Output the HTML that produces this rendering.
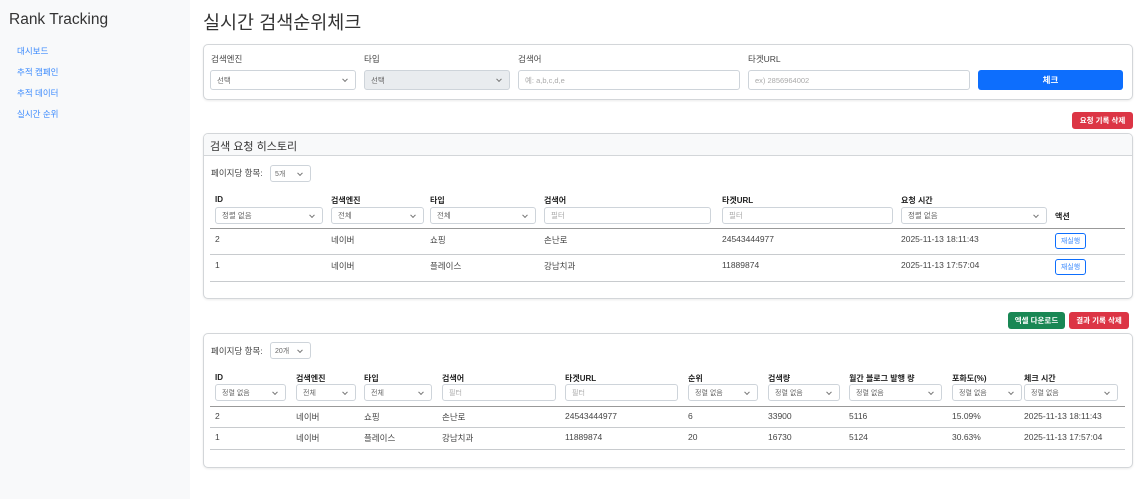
<!DOCTYPE html>
<html><head><meta charset="utf-8"><style>
*{box-sizing:border-box;margin:0;padding:0}
body{width:1143px;height:499px;position:relative;background:#fff;font-family:"Liberation Sans","Noto Sans CJK KR",sans-serif;color:#212529;overflow:hidden}
.a{position:absolute;white-space:nowrap}
.side{position:absolute;left:0;top:0;width:190px;height:499px;background:#f8f9fa}
.nav{position:absolute;left:17px;font-size:8.5px;color:#3d8bfd}
.card{position:absolute;border:1px solid #d3d6d9;border-radius:5px;background:#fff;box-shadow:0 1px 2px rgba(0,0,0,.08)}
.lbl{position:absolute;font-size:8.5px;color:#444}
.ctl{position:absolute;border:1px solid #ced4da;border-radius:3px;background:#fff;font-size:7.5px;color:#666;padding-left:6px;display:flex;align-items:center}
.sel::after{content:"";position:absolute;right:8px;top:50%;width:3px;height:3px;border-right:1px solid #777;border-bottom:1px solid #777;transform:translateY(-70%) rotate(45deg)}
.ph{color:#aaa}
.th{position:absolute;font-size:8px;font-weight:bold;color:#222}
.td{position:absolute;font-size:8.5px;color:#444}
.hr{position:absolute;height:1px;background:#c8cbce}
.btn{position:absolute;color:#fff;font-size:7.5px;font-weight:bold;border-radius:3px;display:flex;align-items:center;justify-content:center}
.re{position:absolute;border:1px solid #0d6efd;border-radius:3px;color:#3d8bfd;font-size:7px;display:flex;align-items:center;justify-content:center;width:31px;height:16px;left:1055px}
</style></head><body>
<div class="side"></div>
<div class="a" style="left:9px;top:11px;font-size:15.5px;color:#333">Rank Tracking</div>
<div class="nav" style="top:45px">대시보드</div>
<div class="nav" style="top:66px">추적 캠페인</div>
<div class="nav" style="top:87px">추적 데이터</div>
<div class="nav" style="top:108px">실시간 순위</div>

<div class="a" style="left:203px;top:9px;font-size:18.5px;color:#333">실시간 검색순위체크</div>

<div class="card" style="left:203px;top:44px;width:930px;height:56px"></div>
<div class="lbl" style="left:211px;top:53px">검색엔진</div>
<div class="lbl" style="left:364px;top:53px">타입</div>
<div class="lbl" style="left:518px;top:53px">검색어</div>
<div class="lbl" style="left:748px;top:53px">타겟URL</div>
<div class="ctl sel" style="left:210px;top:70px;width:146px;height:20px">선택</div>
<div class="ctl sel" style="left:364px;top:70px;width:146px;height:20px;background:#e9ecef">선택</div>
<div class="ctl ph" style="left:518px;top:70px;width:222px;height:20px">예: a,b,c,d,e</div>
<div class="ctl ph" style="left:748px;top:70px;width:222px;height:20px">ex) 2856964002</div>
<div class="btn" style="left:978px;top:70px;width:145px;height:20px;background:#0d6efd;font-size:8.5px">체크</div>

<div class="btn" style="left:1072px;top:112px;width:61px;height:17px;background:#dc3545">요청 기록 삭제</div>

<div class="card" style="left:203px;top:133px;width:930px;height:166px;overflow:hidden">
<div style="height:22px;background:#f8f9fa;border-bottom:1px solid #d3d6d9"></div></div>
<div class="a" style="left:210px;top:138px;font-size:11px;color:#333">검색 요청 히스토리</div>
<div class="lbl" style="left:211px;top:167px">페이지당 항목:</div>
<div class="ctl sel" style="left:270px;top:165px;width:41px;height:17px;font-size:7px;padding-left:4px">5개</div>
<div class="th" style="left:215px;top:195px">ID</div>
<div class="th" style="left:331px;top:195px">검색엔진</div>
<div class="th" style="left:430px;top:195px">타입</div>
<div class="th" style="left:544px;top:195px">검색어</div>
<div class="th" style="left:722px;top:195px">타겟URL</div>
<div class="th" style="left:901px;top:195px">요청 시간</div>
<div class="th" style="left:1055px;top:211px">액션</div>
<div class="ctl sel" style="left:215px;top:207px;width:108px;height:17px">정렬 없음</div>
<div class="ctl sel" style="left:331px;top:207px;width:93px;height:17px">전체</div>
<div class="ctl sel" style="left:430px;top:207px;width:106px;height:17px">전체</div>
<div class="ctl ph" style="left:544px;top:207px;width:167px;height:17px">필터</div>
<div class="ctl ph" style="left:722px;top:207px;width:171px;height:17px">필터</div>
<div class="ctl sel" style="left:901px;top:207px;width:146px;height:17px">정렬 없음</div>
<div class="hr" style="left:210px;top:228px;width:915px;background:#999"></div>
<div class="td" style="left:215px;top:234px">2</div><div class="td" style="left:331px;top:234px">네이버</div><div class="td" style="left:430px;top:234px">쇼핑</div><div class="td" style="left:544px;top:234px">손난로</div><div class="td" style="left:722px;top:234px">24543444977</div><div class="td" style="left:901px;top:234px">2025-11-13 18:11:43</div>
<div class="re" style="top:233px">재실행</div>
<div class="hr" style="left:210px;top:254px;width:915px"></div>
<div class="td" style="left:215px;top:260px">1</div><div class="td" style="left:331px;top:260px">네이버</div><div class="td" style="left:430px;top:260px">플레이스</div><div class="td" style="left:544px;top:260px">강남치과</div><div class="td" style="left:722px;top:260px">11889874</div><div class="td" style="left:901px;top:260px">2025-11-13 17:57:04</div>
<div class="re" style="top:259px">재실행</div>
<div class="hr" style="left:210px;top:281px;width:915px"></div>

<div class="btn" style="left:1008px;top:312px;width:57px;height:17px;background:#198754">엑셀 다운로드</div>
<div class="btn" style="left:1069px;top:312px;width:60px;height:17px;background:#dc3545">결과 기록 삭제</div>

<div class="card" style="left:203px;top:333px;width:930px;height:135px"></div>
<div class="lbl" style="left:211px;top:345px">페이지당 항목:</div>
<div class="ctl sel" style="left:270px;top:342px;width:41px;height:17px;font-size:7px;padding-left:4px">20개</div>
<div class="th" style="left:215px;top:373px">ID</div>
<div class="th" style="left:296px;top:373px">검색엔진</div>
<div class="th" style="left:364px;top:373px">타입</div>
<div class="th" style="left:442px;top:373px">검색어</div>
<div class="th" style="left:565px;top:373px">타겟URL</div>
<div class="th" style="left:688px;top:373px">순위</div>
<div class="th" style="left:768px;top:373px">검색량</div>
<div class="th" style="left:849px;top:373px">월간 블로그 발행 량</div>
<div class="th" style="left:952px;top:373px">포화도(%)</div>
<div class="th" style="left:1024px;top:373px">체크 시간</div>
<div class="ctl sel" style="left:215px;top:384px;width:71px;height:17px;font-size:7px">정렬 없음</div>
<div class="ctl sel" style="left:296px;top:384px;width:60px;height:17px;font-size:7px">전체</div>
<div class="ctl sel" style="left:364px;top:384px;width:68px;height:17px;font-size:7px">전체</div>
<div class="ctl ph" style="left:442px;top:384px;width:114px;height:17px;font-size:7px">필터</div>
<div class="ctl ph" style="left:565px;top:384px;width:113px;height:17px;font-size:7px">필터</div>
<div class="ctl sel" style="left:688px;top:384px;width:70px;height:17px;font-size:7px">정렬 없음</div>
<div class="ctl sel" style="left:768px;top:384px;width:72px;height:17px;font-size:7px">정렬 없음</div>
<div class="ctl sel" style="left:849px;top:384px;width:93px;height:17px;font-size:7px">정렬 없음</div>
<div class="ctl sel" style="left:952px;top:384px;width:70px;height:17px;font-size:7px">정렬 없음</div>
<div class="ctl sel" style="left:1024px;top:384px;width:94px;height:17px;font-size:7px">정렬 없음</div>
<div class="hr" style="left:210px;top:406px;width:915px;background:#999"></div>
<div class="td" style="left:215px;top:411px">2</div><div class="td" style="left:296px;top:411px">네이버</div><div class="td" style="left:364px;top:411px">쇼핑</div><div class="td" style="left:442px;top:411px">손난로</div><div class="td" style="left:565px;top:411px">24543444977</div><div class="td" style="left:688px;top:411px">6</div><div class="td" style="left:768px;top:411px">33900</div><div class="td" style="left:849px;top:411px">5116</div><div class="td" style="left:952px;top:411px">15.09%</div><div class="td" style="left:1024px;top:411px">2025-11-13 18:11:43</div>
<div class="hr" style="left:210px;top:427px;width:915px"></div>
<div class="td" style="left:215px;top:432px">1</div><div class="td" style="left:296px;top:432px">네이버</div><div class="td" style="left:364px;top:432px">플레이스</div><div class="td" style="left:442px;top:432px">강남치과</div><div class="td" style="left:565px;top:432px">11889874</div><div class="td" style="left:688px;top:432px">20</div><div class="td" style="left:768px;top:432px">16730</div><div class="td" style="left:849px;top:432px">5124</div><div class="td" style="left:952px;top:432px">30.63%</div><div class="td" style="left:1024px;top:432px">2025-11-13 17:57:04</div>
<div class="hr" style="left:210px;top:449px;width:915px"></div>
</body></html>
